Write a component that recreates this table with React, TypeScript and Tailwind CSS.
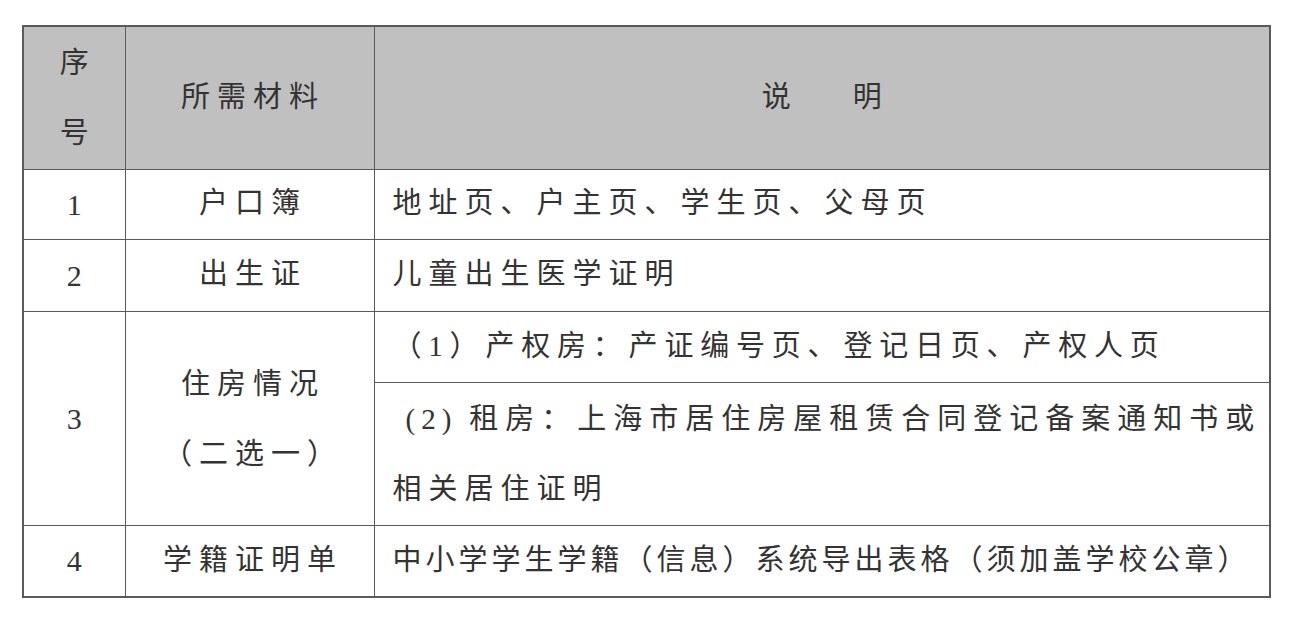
import React from "react";

const font = { fontFamily: '"Liberation Serif", "Noto Sans CJK SC", serif' };

export default function App() {
  const cell = "border border-[#5a5a5a] p-0";
  return (
    <div className="w-[1292px] h-[618px] bg-white pt-[25px] pl-[22px]" style={font}>
      <table className="border-collapse table-fixed w-[1247px] text-[29px] text-[#333] border-2 border-[#5a5a5a]">
        <colgroup>
          <col className="w-[102px]" />
          <col className="w-[249px]" />
          <col className="w-[896px]" />
        </colgroup>
        <thead>
          <tr className="h-[143px] bg-[#c0c0c0]">
            <th className={`${cell} font-normal`}>
              <div className="flex flex-col items-center leading-[70px]">
                <span>序</span>
                <span>号</span>
              </div>
            </th>
            <th className={`${cell} font-normal tracking-[7px] pl-[7px]`}>所需材料</th>
            <th className={`${cell} font-normal`}>
              <div className="flex justify-center gap-[62px]">
                <span>说</span>
                <span>明</span>
              </div>
            </th>
          </tr>
        </thead>
        <tbody>
          <tr className="h-[70px]">
            <td className={`${cell} text-center text-[30px]`}>1</td>
            <td className={`${cell} text-center tracking-[7px] pl-[7px]`}>户口簿</td>
            <td className={`${cell} pl-[18px] tracking-[7px]`}>地址页、户主页、学生页、父母页</td>
          </tr>
          <tr className="h-[72px]">
            <td className={`${cell} text-center text-[30px]`}>2</td>
            <td className={`${cell} text-center tracking-[7px] pl-[7px]`}>出生证</td>
            <td className={`${cell} pl-[18px] tracking-[7px]`}>儿童出生医学证明</td>
          </tr>
          <tr className="h-[71px]">
            <td className={`${cell} text-center text-[30px]`} rowSpan={2}>3</td>
            <td className={`${cell} text-center`} rowSpan={2}>
              <div className="flex flex-col items-center leading-[70px] pt-[2px]">
                <span className="tracking-[7px] pl-[7px]">住房情况</span>
                <span className="tracking-[7px] pl-[7px]">（二选一）</span>
              </div>
            </td>
            <td className={`${cell} pl-[18px] tracking-[6.8px]`}>（1）产权房：产证编号页、登记日页、产权人页</td>
          </tr>
          <tr className="h-[143px]">
            <td className={`${cell} pl-[18px] leading-[70px]`}>
              <div className="whitespace-nowrap">
                <span className="ml-[13px] tracking-[6px]">(2)</span>
                <span className="ml-[12px] tracking-[7px]">租房：上海市居住房屋租赁合同登记备案通知书或</span>
              </div>
              <div className="tracking-[7px]">相关居住证明</div>
            </td>
          </tr>
          <tr className="h-[72px]">
            <td className={`${cell} text-center text-[30px]`}>4</td>
            <td className={`${cell} text-center tracking-[7px] pl-[7px]`}>学籍证明单</td>
            <td className={`${cell} pl-[18px] tracking-[4px]`}>中小学学生学籍（信息）系统导出表格（须加盖学校公章）</td>
          </tr>
        </tbody>
      </table>
    </div>
  );
}
